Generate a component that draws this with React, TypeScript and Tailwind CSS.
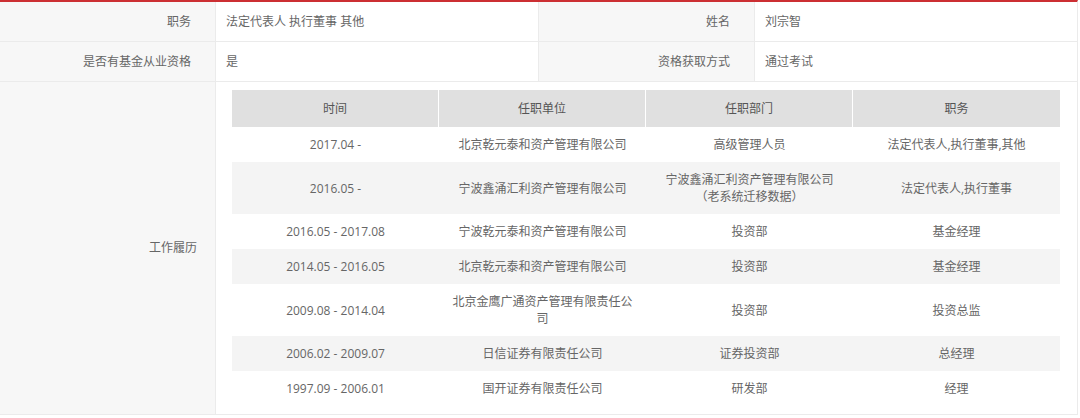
import React from "react";

const rows: { time: string; unit: string; dept: React.ReactNode; pos: string }[] = [
  { time: "2017.04 -", unit: "北京乾元泰和资产管理有限公司", dept: "高级管理人员", pos: "法定代表人,执行董事,其他" },
  {
    time: "2016.05 -",
    unit: "宁波鑫涌汇利资产管理有限公司",
    dept: (
      <>
        宁波鑫涌汇利资产管理有限公司
        <br />
        （老系统迁移数据）
      </>
    ),
    pos: "法定代表人,执行董事",
  },
  { time: "2016.05 - 2017.08", unit: "宁波乾元泰和资产管理有限公司", dept: "投资部", pos: "基金经理" },
  { time: "2014.05 - 2016.05", unit: "北京乾元泰和资产管理有限公司", dept: "投资部", pos: "基金经理" },
  { time: "2009.08 - 2014.04", unit: "北京金鹰广通资产管理有限责任公司", dept: "投资部", pos: "投资总监" },
  { time: "2006.02 - 2009.07", unit: "日信证券有限责任公司", dept: "证券投资部", pos: "总经理" },
  { time: "1997.09 - 2006.01", unit: "国开证券有限责任公司", dept: "研发部", pos: "经理" },
];

export default function App() {
  return (
    <div
      className="w-[1080px] h-[418px] bg-white text-[12px] text-[#666]"
      style={{ fontFamily: '"Open Sans", "Noto Sans CJK SC", sans-serif' }}
    >
      <div className="w-[1078px] border-t-2 border-[#cc2f33] border-r border-r-[#ebebeb]">
        <div className="flex h-[40px] border-b border-[#ebebeb]">
          <div className="w-[216px] border-r border-[#ebebeb] bg-[#f7f7f7] flex items-center justify-end pr-6">职务</div>
          <div className="w-[323px] border-r border-[#ebebeb] flex items-center pl-[10px]">法定代表人 执行董事 其他</div>
          <div className="w-[216px] border-r border-[#ebebeb] bg-[#f7f7f7] flex items-center justify-end pr-6">姓名</div>
          <div className="flex-1 flex items-center pl-[10px]">刘宗智</div>
        </div>
        <div className="flex h-[40px] border-b border-[#ebebeb]">
          <div className="w-[216px] border-r border-[#ebebeb] bg-[#f7f7f7] flex items-center justify-end pr-6">是否有基金从业资格</div>
          <div className="w-[323px] border-r border-[#ebebeb] flex items-center pl-[10px]">是</div>
          <div className="w-[216px] border-r border-[#ebebeb] bg-[#f7f7f7] flex items-center justify-end pr-6">资格获取方式</div>
          <div className="flex-1 flex items-center pl-[10px]">通过考试</div>
        </div>
        <div className="flex border-b border-[#ebebeb]">
          <div className="w-[216px] border-r border-[#ebebeb] bg-[#f7f7f7] flex items-center justify-end pr-[18px]">工作履历</div>
          <div className="flex-1 pl-4 pr-[17px] pt-2 pb-2">
            <div className="w-[828px]">
              <div className="grid grid-cols-4 h-[37px] bg-[#e0e0e0] text-[#555]">
                <div className="flex items-center justify-center border-r border-white">时间</div>
                <div className="flex items-center justify-center border-r border-white">任职单位</div>
                <div className="flex items-center justify-center border-r border-white">任职部门</div>
                <div className="flex items-center justify-center">职务</div>
              </div>
              {rows.map((r, i) => (
                <div
                  key={i}
                  className={`grid grid-cols-4 leading-[17px] ${i % 2 === 1 ? "bg-[#f4f4f4]" : "bg-white"}`}
                >
                  <div className="py-[9px] px-3 text-center flex items-center justify-center">{r.time}</div>
                  <div className="py-[9px] px-3 text-center flex items-center justify-center">{r.unit}</div>
                  <div className="py-[9px] px-3 text-center flex items-center justify-center">{r.dept}</div>
                  <div className="py-[9px] px-3 text-center flex items-center justify-center">{r.pos}</div>
                </div>
              ))}
            </div>
          </div>
        </div>
      </div>
    </div>
  );
}
